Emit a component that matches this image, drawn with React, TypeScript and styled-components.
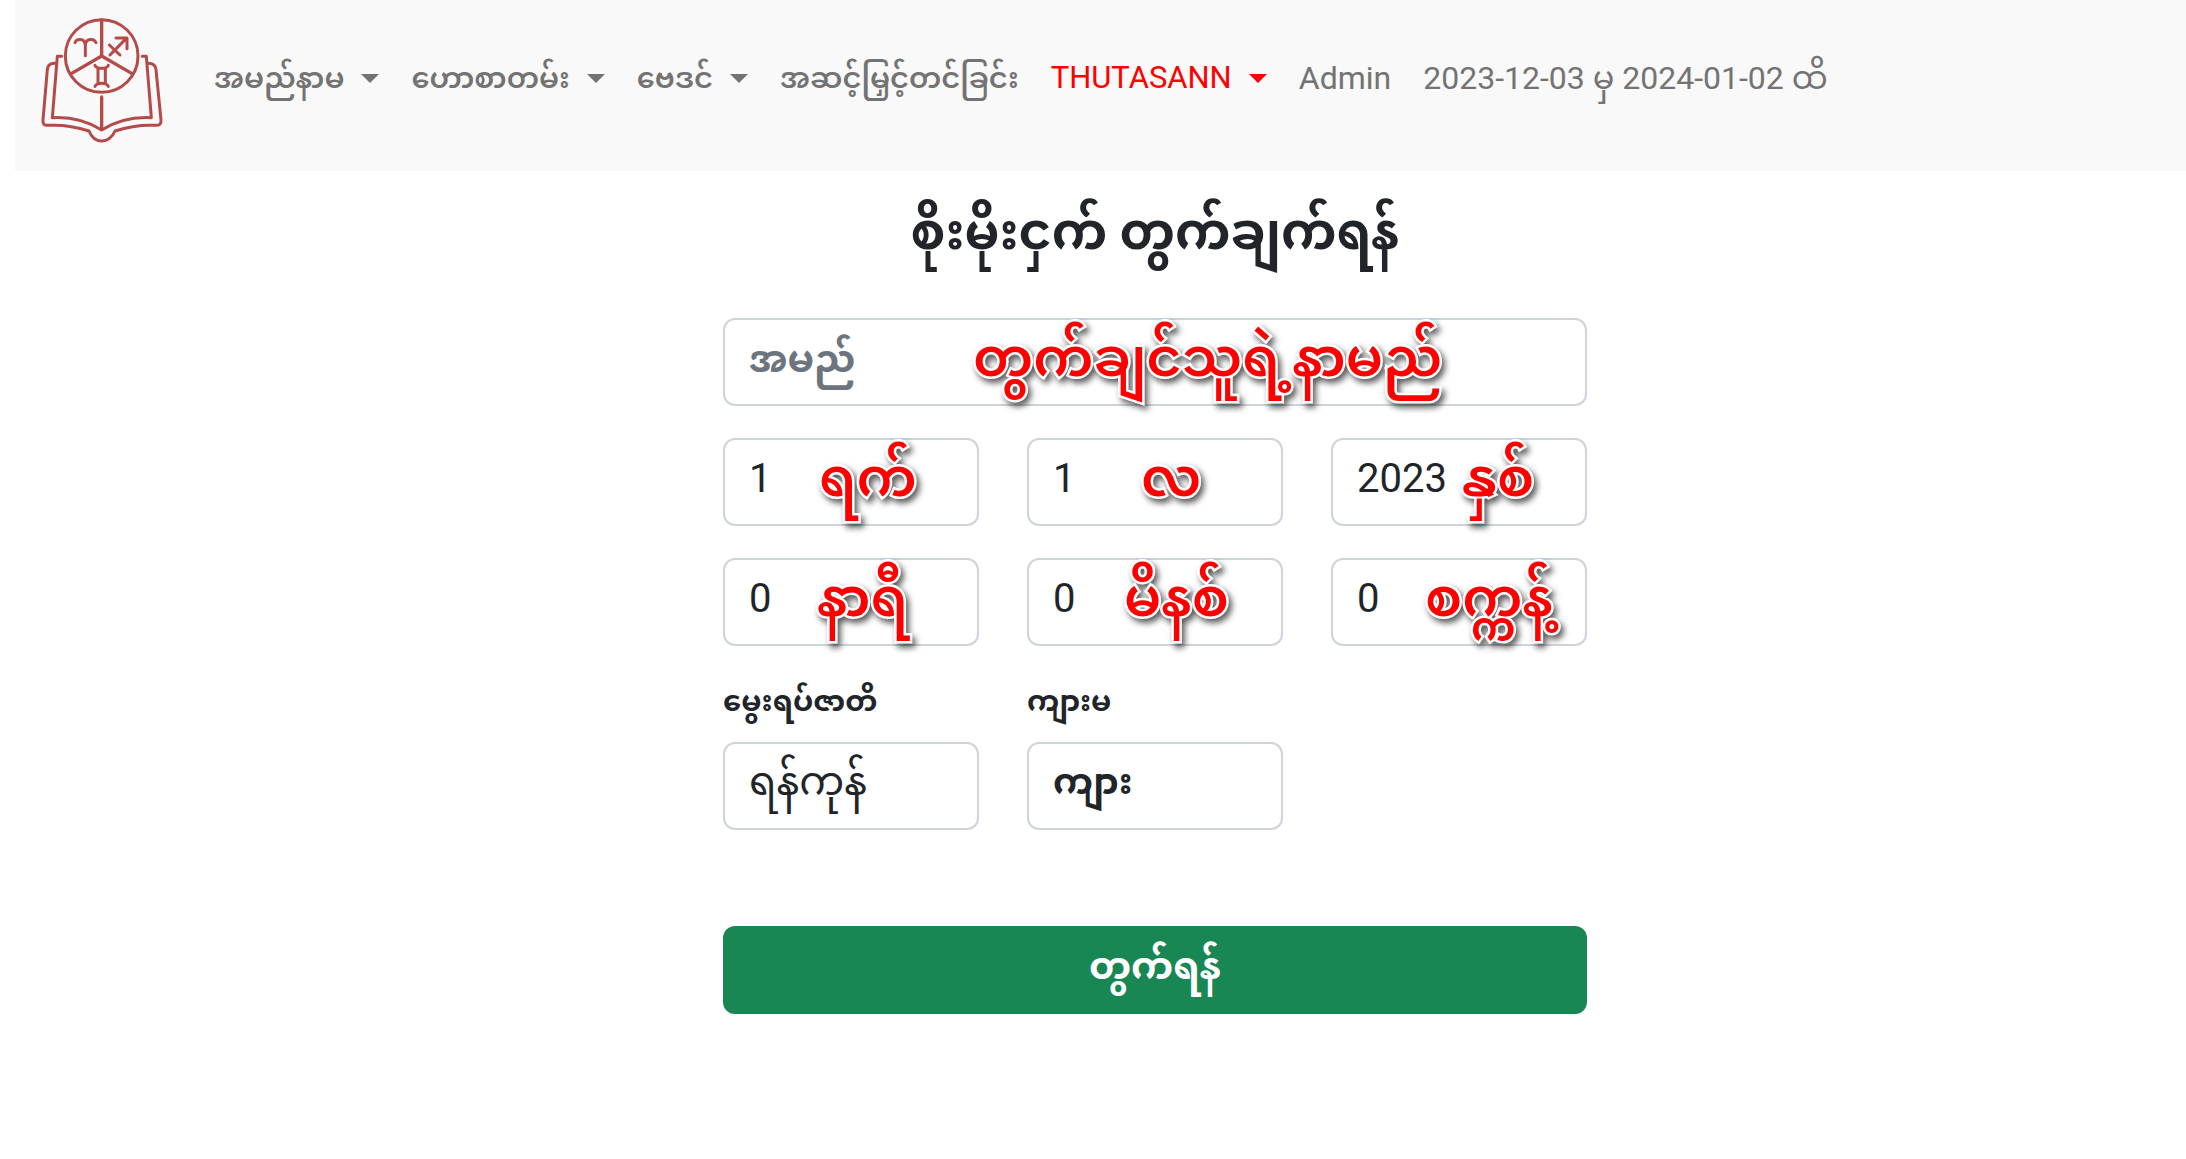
import React from "react";
import styled, { createGlobalStyle } from "styled-components";

const GlobalStyle = createGlobalStyle`
  *, *::before, *::after { box-sizing: border-box; }
  body {
    margin: 0;
    background: #fff;
    color: #212529;
    font-family: Roboto, "Noto Sans Myanmar", "Noto Sans", sans-serif;
  }
`;

const Page = styled.div`
  padding-left: 15px;
`;

const Navbar = styled.header`
  display: flex;
  align-items: center;
  gap: 35px;
  padding: 18px 26px 27px;
  background: #f9f9f9;
`;

const Brand = styled.a`
  display: block;
  line-height: 0;
`;

const Nav = styled.nav`
  display: flex;
  align-items: center;
  padding-bottom: 6px;
`;

const NavLink = styled.a<{ $active?: boolean; $size: number }>`
  display: flex;
  align-items: center;
  gap: 17px;
  padding: 0 16px;
  font-size: ${(p) => p.$size}px;
  font-weight: ${(p) => (p.$size < 30 ? 600 : 400)};
  line-height: 48px;
  white-space: nowrap;
  text-decoration: none;
  color: ${(p) => (p.$active ? "#ff0000" : "#737373")};
`;

const Caret = styled.span`
  border-top: 9px solid currentColor;
  border-left: 9px solid transparent;
  border-right: 9px solid transparent;
`;

const Main = styled.main`
  display: flex;
  justify-content: center;
  padding: 24px 0 0 109px;
`;

const Form = styled.form`
  display: grid;
  grid-template-columns: repeat(3, 1fr);
  gap: 32px 48px;
  width: 100%;
  max-width: 864px;
`;

const Title = styled.h1`
  grid-column: 1 / -1;
  margin: 0 0 16px;
  font-size: 50px;
  line-height: 75px;
  font-weight: 700;
  text-align: center;
  white-space: nowrap;
`;

const Field = styled.div<{ $wide?: boolean }>`
  position: relative;
  grid-column: ${(p) => (p.$wide ? "1 / -1" : "auto")};
`;

const Control = styled.input<{ $bold?: boolean }>`
  display: block;
  width: 100%;
  height: 88px;
  padding: 0 24px 8px;
  border: 2px solid #ced4da;
  border-radius: 12px;
  background: #fff;
  color: #212529;
  font-family: inherit;
  font-size: ${(p) => (p.$bold ? 36 : 40)}px;
  line-height: 76px;
  font-weight: ${(p) => (p.$bold ? 700 : 400)};
  appearance: none;

  &::placeholder {
    color: #6c757d;
    opacity: 1;
    font-size: 38px;
    font-weight: 700;
  }
`;

const Note = styled.label<{ $left: number }>`
  position: absolute;
  top: 0;
  left: ${(p) => p.$left}px;
  font-size: 54px;
  line-height: 80px;
  font-weight: 600;
  white-space: nowrap;
  color: #ff0000;
  -webkit-text-stroke: 5px #fff;
  paint-order: stroke fill;
  filter: drop-shadow(3px 4px 3px rgba(0, 0, 0, 0.65));
`;

const Caption = styled.label`
  display: block;
  margin-bottom: 18px;
  font-size: 29px;
  line-height: 46px;
  font-weight: 700;
`;

const Submit = styled.button`
  grid-column: 1 / -1;
  height: 88px;
  margin-top: 64px;
  border: 0;
  border-radius: 12px;
  background: #198754;
  color: #fff;
  font-family: inherit;
  font-size: 38px;
  font-weight: 700;
`;

const Logo = () => (
  <svg width="122" height="126" viewBox="35 23 366 378" fill="none" stroke="#b54a4a" strokeWidth="9" strokeLinecap="round" strokeLinejoin="round" aria-label="THUTASANN">
    <circle cx="217" cy="137" r="109" />
    <path d="M217 28V137L127 189M217 137L307 189" strokeWidth="10" />
    <path d="M137 97C141 84 165 82 168 103C171 82 195 84 200 97M168 103V136" />
    <path d="M242 134L291 84M260 83H293V115M240 104L272 134" />
    <path d="M197 165C203 177 231 177 237 165M197 228C203 216 231 216 237 228M206 174V220M228 174V220" />
    <path d="M97 138H84L69 322C125 319 174 332 217 359C260 332 309 319 366 322L351 138H339" />
    <path d="M79 159C64 158 55 164 54 178L41 329C40 340 44 346 56 345C102 342 142 350 179 362C187 382 198 392 217 392C236 392 248 382 257 362C294 350 333 342 379 345C391 346 396 340 395 329L380 178C379 164 371 159 356 159" />
    <path d="M217 260V355" strokeWidth="10" />
  </svg>
);

const links = [
  { text: "အမည်နာမ", menu: true, size: 29 },
  { text: "ဟောစာတမ်း", menu: true, size: 29 },
  { text: "ဗေဒင်", menu: true, size: 29 },
  { text: "အဆင့်မြှင့်တင်ခြင်း", size: 29 },
  { text: "THUTASANN", menu: true, active: true, size: 31 },
  { text: "Admin", size: 32 },
  { text: "2023-12-03 မှ 2024-01-02 ထိ", size: 32 },
];

const numbers = [
  { id: "day", value: "1", note: "ရက်", left: 96 },
  { id: "month", value: "1", note: "လ", left: 114 },
  { id: "year", value: "2023", note: "နှစ်", left: 131 },
  { id: "hour", value: "0", note: "နာရီ", left: 94 },
  { id: "minute", value: "0", note: "မိနစ်", left: 97 },
  { id: "second", value: "0", note: "စက္ကန့်", left: 94 },
];

export default function App() {
  return (
    <Page>
      <GlobalStyle />
      <Navbar>
        <Brand href="#"><Logo /></Brand>
        <Nav>
          {links.map((l) => (
            <NavLink key={l.text} href="#" $active={l.active} $size={l.size}>
              {l.text}
              {l.menu && <Caret />}
            </NavLink>
          ))}
        </Nav>
      </Navbar>
      <Main>
        <Form>
          <Title>စိုးမိုးငှက် တွက်ချက်ရန်</Title>
          <Field $wide>
            <Control id="name" placeholder="အမည်" />
            <Note htmlFor="name" $left={250}>တွက်ချင်သူရဲ့နာမည်</Note>
          </Field>
          {numbers.map((n) => (
            <Field key={n.id}>
              <Control id={n.id} defaultValue={n.value} />
              <Note htmlFor={n.id} $left={n.left}>{n.note}</Note>
            </Field>
          ))}
          <Field>
            <Caption htmlFor="place">မွေးရပ်ဇာတိ</Caption>
            <Control as="select" id="place"><option>ရန်ကုန်</option></Control>
          </Field>
          <Field>
            <Caption htmlFor="gender">ကျားမ</Caption>
            <Control as="select" id="gender" $bold><option>ကျား</option></Control>
          </Field>
          <Submit type="button">တွက်ရန်</Submit>
        </Form>
      </Main>
    </Page>
  );
}
